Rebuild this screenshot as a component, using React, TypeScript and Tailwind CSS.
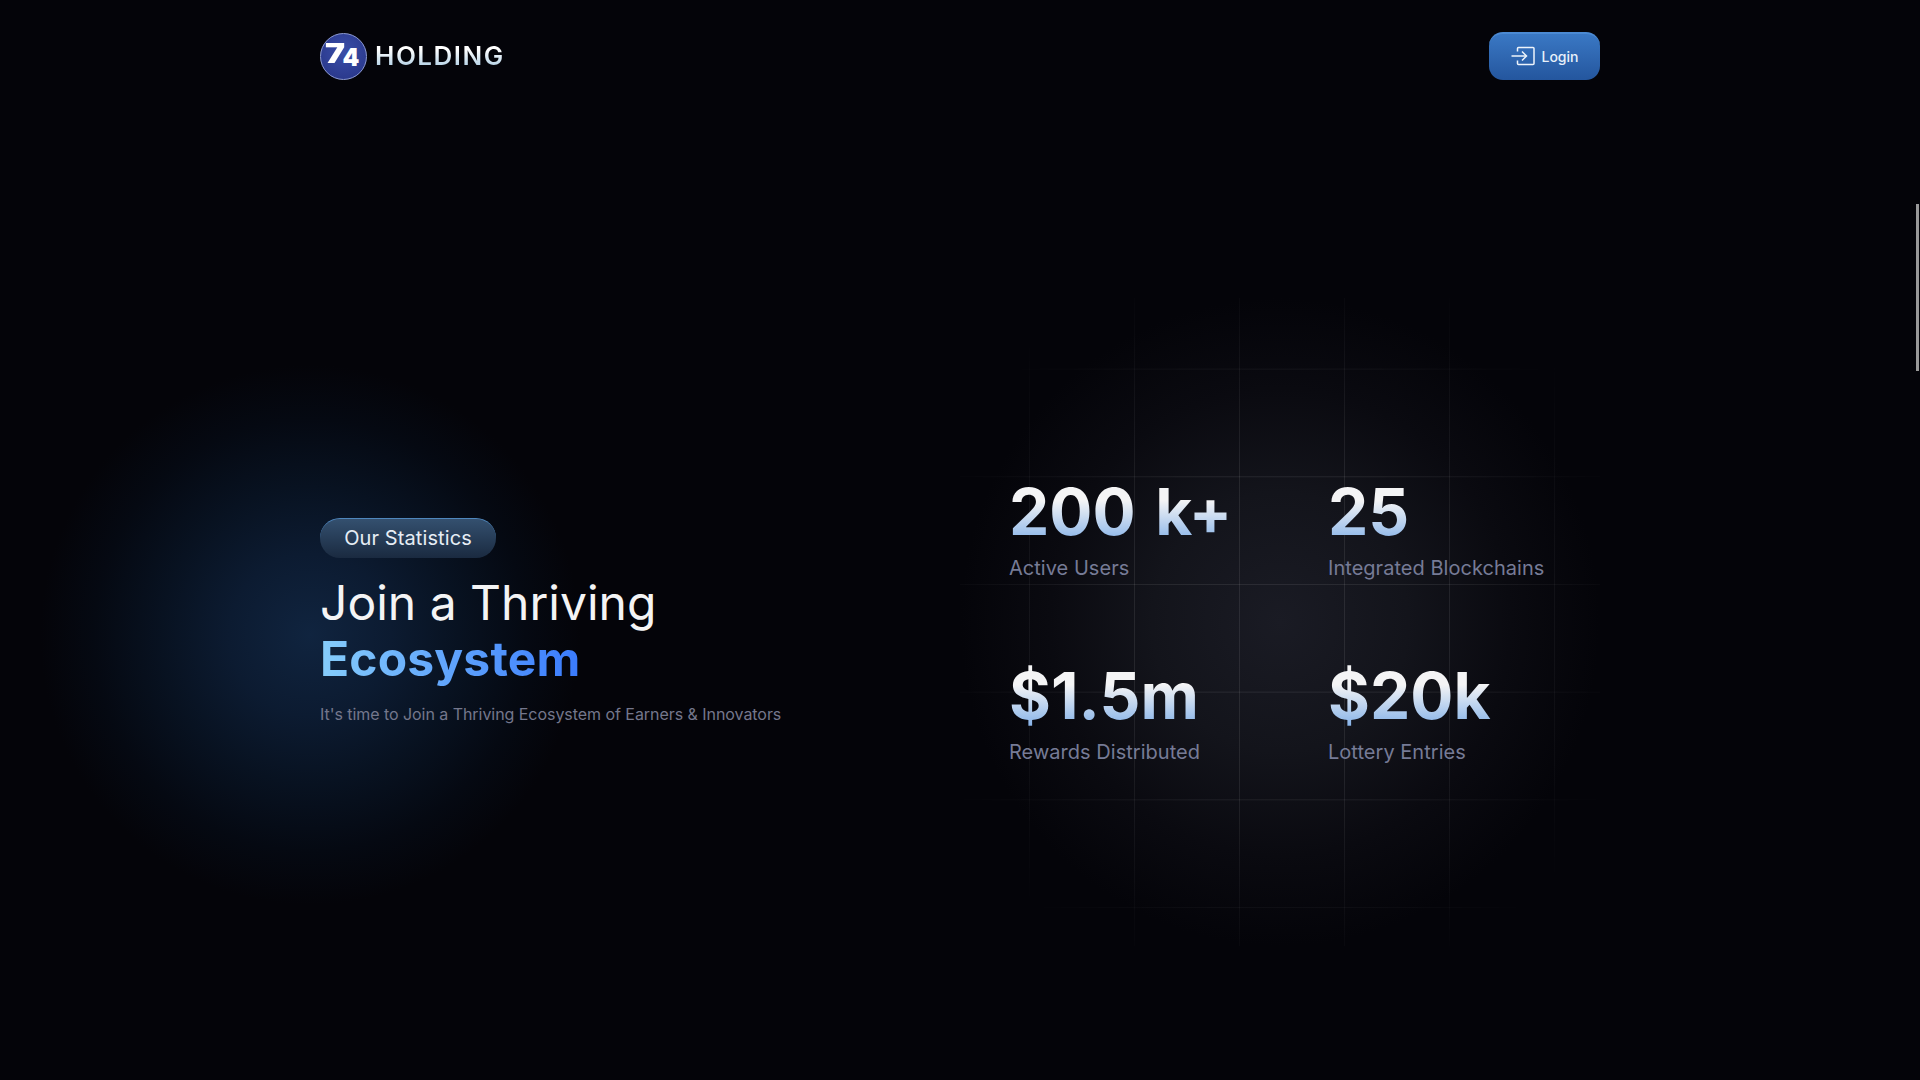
import React from "react";

const stats = [
  { value: "200 k+", label: "Active Users" },
  { value: "25", label: "Integrated Blockchains" },
  { value: "$1.5m", label: "Rewards Distributed" },
  { value: "$20k", label: "Lottery Entries" },
];

function Logo() {
  return (
    <div className="flex items-center gap-[8px]">
      <div className="flex h-[47px] w-[47px] items-center justify-center rounded-full border-[1.5px] border-[#8d9bd6] bg-[radial-gradient(circle_at_50%_40%,#3a4ea8,#263385)]">
        <span className="ml-[1px] flex items-start font-['Inter'] font-black leading-none text-white">
          <span className="mt-[-3px] inline-block origin-right scale-x-[1.25] text-[27px]">7</span>
          <span className="mt-[3px] ml-[-2px] inline-block text-[24px]">4</span>
        </span>
      </div>
      <span className="bg-[linear-gradient(180deg,#ffffff_25%,#a9cbe2_100%)] bg-clip-text font-['Inter'] text-[26px] font-semibold leading-none tracking-[1.5px] text-transparent">
        HOLDING
      </span>
    </div>
  );
}

export default function App() {
  return (
    <div className="relative h-[1080px] w-full overflow-hidden bg-[#040409] font-['Inter',sans-serif]">
      <div className="absolute left-[40px] top-[365px] h-[540px] w-[540px] bg-[radial-gradient(closest-side,#10243f_0%,#0c1b31_30%,#081221_55%,#050912_80%,rgba(4,4,9,0)_100%)]" />
      <div className="absolute right-[1px] top-[204px] h-[167px] w-[3px] bg-[#999999]" />

      <div className="relative mx-auto w-[1280px]">
        <header className="flex h-[112px] items-center justify-between">
          <Logo />
          <button className="flex h-[48px] w-[111px] items-center justify-center gap-[7px] rounded-[14px] border-t-2 border-[#4b8ad3] bg-[linear-gradient(180deg,#3a78c4_0%,#24569e_100%)] pb-[2px] text-[14px] font-medium text-[#e8f0fa]">
            <svg width="24" height="20" viewBox="0 0 24 20" fill="none" stroke="#eef4fb" strokeWidth="1.5">
              <path d="M6.5 5.5V2.5a1 1 0 0 1 1-1h14.5a1 1 0 0 1 1 1v15a1 1 0 0 1-1 1H7.5a1 1 0 0 1-1-1v-3" />
              <path d="M0.5 10H15" />
              <path d="M11 5.5l4.5 4.5L11 14.5" />
            </svg>
            Login
          </button>
        </header>

        <main className="flex h-[968px] items-start">
          <section className="w-[689px] pt-[406px]">
            <div className="flex h-[40px] w-[176px] items-center justify-center rounded-full border-t border-[#4f87bd] bg-[linear-gradient(180deg,#34506f_0%,#1a2a40_100%)] pb-[1px] text-[20px] tracking-[0.1px] text-[#e6edf5]">
              Our Statistics
            </div>
            <h2 className="mt-[17px] text-[48px] font-normal leading-[56px] text-[#f4f4f5]">
              Join a Thriving
              <br />
              <span className="bg-[linear-gradient(90deg,#86cdfb_0%,#3a7bfd_100%)] bg-clip-text font-bold tracking-[0.15px] text-transparent">Ecosystem</span>
            </h2>
            <p className="mt-[15px] text-[16px] leading-[24px] tracking-[-0.05px] text-[#74778c]">
              It's time to Join a Thriving Ecosystem of Earners &amp; Innovators
            </p>
          </section>

          <section className="relative w-[591px] pt-[362px]">
            <div className="absolute left-[-49px] top-[186px] h-[648px] w-[640px] bg-[radial-gradient(closest-side,#1a1b24_0%,#13141b_40%,#0a0a10_72%,rgba(4,4,9,0)_100%)]" />
            <div className="absolute left-[-49px] top-[186px] h-[648px] w-[640px] bg-[linear-gradient(to_right,rgba(255,255,255,0.085)_1px,transparent_1px),linear-gradient(to_bottom,rgba(255,255,255,0.085)_1px,transparent_1px)] bg-[size:105px_107.7px] bg-[position:69px_70.6px] [mask-image:radial-gradient(circle_at_center,black_35%,transparent_85%)]" />
            <div className="relative grid grid-cols-[319px_1fr] gap-y-[76px]">
              {stats.map((s) => (
                <div key={s.label}>
                  <div className="w-fit bg-[linear-gradient(180deg,#f4f4f5_35%,#8ab5e9_88%)] bg-clip-text text-[64px] font-bold leading-[76px] text-transparent [word-spacing:4.5px]">
                    {s.value}
                  </div>
                  <div className="mt-[4px] text-[20px] leading-[28px] tracking-[0.03px] text-[#767b96]">{s.label}</div>
                </div>
              ))}
            </div>
          </section>
        </main>
      </div>
    </div>
  );
}
